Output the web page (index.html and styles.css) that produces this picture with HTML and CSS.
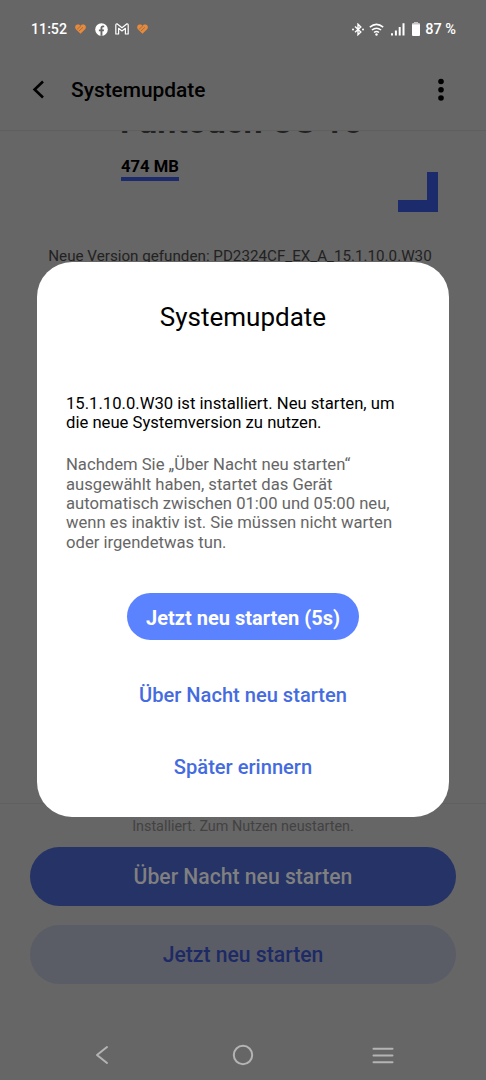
FILE: index.html
```html
<!DOCTYPE html>
<html lang="de">
<head>
<meta charset="utf-8">
<title>Systemupdate</title>
<link rel="stylesheet" href="styles.css">
</head>
<body>
<div class="screen">
  <header class="status">
    <span class="clock">11:52</span>
    <svg class="heart" width="11" height="10" viewBox="0 0 11 10"><path fill="#e88a3c" d="M5.500 9.800.9 5.200C-.5 3.700.2 1.200 2.100.6 3.500.2 4.800.8 5.500 1.700 6.200.8 7.500.2 8.900.6c1.900.6 2.600 3.100 1.200 4.600z"/><path d="M2.200 5.200 6.200 1.500M4 6.900 8 3.300" fill="none" stroke="#7c6450" stroke-width=".7"/></svg>
    <svg class="facebook" width="13" height="13" viewBox="0 0 13 13"><circle cx="6.500" cy="6.500" r="6.300" fill="#fff"/><path fill="#666" d="M5.500 12.800V8.300H3.900V6.500h1.600V5.200c0-1.700 1-2.600 2.500-2.600l1.200.1v1.600h-.8c-.8 0-1 .4-1 1v1.200h1.700l-.3 1.800H7.400v4.500z"/></svg>
    <svg class="gmail" width="14" height="12" viewBox="0 0 14 12"><path d="M.8 11V2.200Q.8.7 2 .8L7 4.800 12 .8q1.200-.1 1.200 1.400V11h-2.800V5.300L7 8 3.600 5.300V11z" fill="none" stroke="#fff" stroke-width="1.200" stroke-linejoin="round"/></svg>
    <svg class="heart" width="11" height="10" viewBox="0 0 11 10"><path fill="#e88a3c" d="M5.500 9.800.9 5.200C-.5 3.700.2 1.200 2.100.6 3.500.2 4.800.8 5.500 1.700 6.200.8 7.500.2 8.900.6c1.900.6 2.600 3.100 1.200 4.600z"/><path d="M2.200 5.200 6.200 1.500M4 6.900 8 3.300" fill="none" stroke="#7c6450" stroke-width=".7"/></svg>
    <div class="system">
      <svg width="12" height="13" viewBox="0 0 12 13"><path d="M3 3.600 8.800 9 6 11.700V1.200L8.800 4 3 9.300" fill="none" stroke="#fff" stroke-width="1.400"/><circle cx="1" cy="6.500" r="1" fill="#fff"/><circle cx="11" cy="6.500" r="1" fill="#fff"/></svg>
      <svg class="wifi" width="15" height="13" viewBox="0 0 15 13"><path d="M.8 4.200q6.700-5.600 13.400 0M2.900 7q4.600-3.700 9.200 0M5 9.500q2.500-1.900 5 0" fill="none" stroke="#fff" stroke-width="1.500"/><circle cx="7.500" cy="11.500" r="1.200" fill="#fff"/></svg>
      <svg class="signal" width="14" height="13" viewBox="0 0 14 13"><path fill="#fff" d="M0 10.200h2v2.200H0zM3.900 7.500h2v4.900h-2zM7.700 4h2v8.400h-2zM11.500.2h2v12.200h-2z"/></svg>
      <svg class="battery" width="8" height="14" viewBox="0 0 8 14"><path fill="#c4c4c4" d="M2 0h4v1h1q1 0 1 1v1H0V2q0-1 1-1h1z"/><path fill="#fff" d="M0 2.600h8V13q0 1-1 1H1q-1 0-1-1z"/></svg>
      <span class="percent">87 %</span>
    </div>
  </header>

  <div class="appbar">
    <svg width="12" height="19" viewBox="0 0 12 19"><path d="M11 1.500 2.600 9.500l8.400 8" fill="none" stroke="#000" stroke-width="2.600"/></svg>
    <h1 class="heading">Systemupdate</h1>
    <svg class="more" width="6" height="23" viewBox="0 0 6 23"><circle cx="3" cy="3.500" r="2.800"/><circle cx="3" cy="11.800" r="2.800"/><circle cx="3" cy="20" r="2.800"/></svg>
  </div>

  <main class="content">
    <div class="product"><span>Funtouch OS 15</span></div>
    <div class="meta"><span class="size">474 MB</span><span class="corner"></span></div>
    <p class="found">Neue Version gefunden: PD2324CF_EX_A_15.1.10.0.W30</p>
  </main>

  <section class="actions">
    <p class="note">Installiert. Zum Nutzen neustarten.</p>
    <div class="action primary"><span>Über Nacht neu starten</span></div>
    <div class="action secondary"><span>Jetzt neu starten</span></div>
  </section>

  <nav class="navbar">
    <svg width="14" height="20" viewBox="0 0 14 20"><path d="M12 2 2 10l10 8" fill="none" stroke="#b4b4b4" stroke-width="2" stroke-linecap="round" stroke-linejoin="round"/></svg>
    <svg class="home" width="22" height="22" viewBox="0 0 22 22"><circle cx="11" cy="11" r="9.200" fill="none" stroke="#b4b4b4" stroke-width="2"/></svg>
    <svg width="22" height="18" viewBox="0 0 22 18"><path d="M1.500 2.800h19M1.500 9.500h19M1.500 16.200h19" stroke="#b4b4b4" stroke-width="2" stroke-linecap="round"/></svg>
  </nav>

  <div class="dialog">
    <h2 class="title"><span>Systemupdate</span></h2>
    <p class="lead">15.1.10.0.W30 ist installiert. Neu starten, um<br>die neue Systemversion zu nutzen.</p>
    <p class="detail">Nachdem Sie „Über Nacht neu starten“<br>ausgewählt haben, startet das Gerät<br>automatisch zwischen 01:00 und 05:00 neu,<br>wenn es inaktiv ist. Sie müssen nicht warten<br>oder irgendetwas tun.</p>
    <div class="confirm"><span>Jetzt neu starten (5s)</span></div>
    <div class="link overnight"><span>Über Nacht neu starten</span></div>
    <div class="link later"><span>Später erinnern</span></div>
  </div>
</div>
</body>
</html>
```

FILE: styles.css
```css
* { box-sizing: border-box; margin: 0; padding: 0; }
body { background: #666; font-family: Roboto, sans-serif; color: #000; }
svg { display: block; flex: none; }
.screen { position: relative; width: 486px; height: 1080px; overflow: hidden; display: flex; flex-direction: column; background: #666; }

.status { height: 58px; display: flex; align-items: center; padding: 0 30px 0 31px; color: #fff; font-size: 14.5px; font-weight: 500; white-space: nowrap; }
.clock { width: 44px; font-size: 14.200px; }
.facebook { margin-left: 9px; }
.gmail { margin: 0 8px 0 7px; }
.system { margin-left: auto; display: flex; align-items: center; }
.wifi { margin-left: 5px; }
.signal { margin-left: 7px; }
.battery { margin: 0 5px 0 7px; }

.appbar { height: 73px; padding: 0 42px 9px 32px; display: flex; align-items: center; border-bottom: 1px solid #5f5f5f; }
.heading { margin-left: 27px; font-size: 20.900px; font-weight: 500; }
.more { margin-left: auto; }

.content { flex: 1; }
.product { height: 2px; overflow: hidden; display: flex; align-items: flex-end; padding-left: 120px; font-size: 34px; line-height: 40px; font-weight: 700; color: #222; white-space: nowrap; }
.product span { margin-bottom: -8px; }
.meta { display: flex; justify-content: space-between; padding: 24px 48px 0 121px; height: 79px; }
.size { height: 24px; border-bottom: 4px solid #1c2b6c; font-size: 16.600px; line-height: 19px; font-weight: 700; }
.corner { width: 40px; height: 40px; margin-top: 15px; border: solid #1c2b6c; border-width: 0 11px 12px 0; }
.found { margin-top: 34px; text-align: center; padding-right: 6px; font-size: 15.200px; line-height: 20px; color: #222; white-space: nowrap; }

.actions { height: 227px; border-top: 1px solid #606060; padding: 14px 30px 0; }
.note { height: 29px; text-align: center; font-size: 14.400px; line-height: 18px; color: #424242; }
.action { height: 59px; border-radius: 30px; display: flex; align-items: center; justify-content: center; font-size: 21.150px; font-weight: 500; }
.primary { background: #253366; color: #808080; }
.secondary { margin-top: 19px; background: #5b5d66; color: #1d2a65; }

.navbar { height: 50px; display: flex; align-items: center; justify-content: space-between; padding: 0 92px 0 95px; }
.home { margin-left: 5px; }

.dialog { position: absolute; left: 37px; top: 262px; width: 412px; height: 555px; border-radius: 35px; background: #fff; padding: 39px 29px 0; display: flex; flex-direction: column; white-space: nowrap; }
.title { text-align: center; font-size: 26px; line-height: 32px; font-weight: 400; }
.lead, .detail { font-size: 16.650px; line-height: 19.400px; }
.lead { margin-top: 61px; }
.detail { margin-top: 22.400px; color: #666; }
.confirm { align-self: center; width: 232px; height: 47px; margin-top: 41px; padding-top: 3px; border-radius: 24px; background: #5b82ff; color: #fff; display: flex; align-items: center; justify-content: center; font-size: 20px; font-weight: 700; }
.link { text-align: center; color: #456be0; font-size: 20.100px; line-height: 24px; font-weight: 500; }
.overnight { margin-top: 43px; }
.later { margin-top: 48px; }
```
